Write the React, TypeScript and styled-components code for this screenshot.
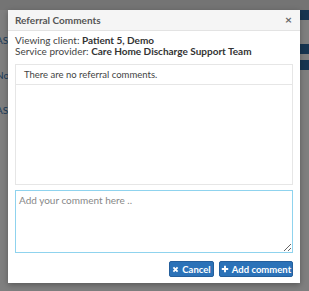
import React from 'react';
import styled, {createGlobalStyle} from 'styled-components';

const GlobalStyle = createGlobalStyle`
    html, body {
        margin: 0;
        padding: 0;
        width: 309px;
        height: 291px;
        overflow: hidden;
        font-family: Lato, "Open Sans", sans-serif;
    }
`;

const Page = styled.div`
    position: relative;
    width: 309px;
    height: 291px;
    background: #fff;
    display: grid;
    grid-template-rows: 10px 1fr;
`;

const TopBar = styled.div`
    background: #e8e8e8;
`;

const PageBody = styled.div`
    display: flex;
    justify-content: space-between;
`;

const LeftList = styled.div`
    width: 8px;
    overflow: hidden;
    display: flex;
    flex-direction: column;
    gap: 23px;
    padding-top: 24px;
    font-size: 10px;
    color: #3a78b5;
    white-space: nowrap;
    div {
        margin-left: -4px;
    }
`;

const RightList = styled.div`
    display: flex;
    flex-direction: column;
    gap: 6px;
    width: 11px;
    overflow: hidden;
`;

const PageButton = styled.div<{$h: number}>`
    width: 11px;
    height: ${p => p.$h}px;
    background: #2f6aa3;
`;

const PageLink = styled.div`
    height: 12px;
`;

const Overlay = styled.div`
    position: absolute;
    inset: 0;
    background: rgba(0, 0, 0, 0.5);
`;

const Modal = styled.div`
    position: absolute;
    left: 8px;
    top: 10px;
    width: 292px;
    height: 273px;
    background: #fff;
    display: flex;
    flex-direction: column;
    box-shadow: 0 2px 6px rgba(0, 0, 0, 0.3);
`;

const Header = styled.div`
    height: 21px;
    background: #f5f5f5;
    border-bottom: 1px solid #e3e3e3;
    display: flex;
    align-items: center;
    justify-content: space-between;
    padding: 0 8px 0 7px;
    box-sizing: border-box;
`;

const Title = styled.div`
    font-size: 10px;
    font-weight: 700;
    color: #555;
`;

const Close = styled.div`
    font-size: 12px;
    font-weight: 700;
    color: #666;
    line-height: 1;
`;

const Body = styled.div`
    flex: 1;
    display: flex;
    flex-direction: column;
    padding: 4px 7px 6px;
`;

const Info = styled.div`
    font-size: 10px;
    line-height: 11px;
    color: #444;
    b {
        color: #333;
    }
`;

const Comments = styled.div`
    margin-top: 7px;
    height: 121px;
    border: 1px solid #e6e6e6;
    box-sizing: border-box;
`;

const CommentRow = styled.div`
    height: 19px;
    border-bottom: 1px solid #e6e6e6;
    display: flex;
    align-items: center;
    padding-left: 8px;
    font-size: 9.5px;
    color: #444;
`;

const TextArea = styled.textarea`
    margin-top: 5px;
    height: 63px;
    border: 1px solid #8fd3ee;
    box-sizing: border-box;
    padding: 3px 3px;
    font-family: Lato, "Open Sans", sans-serif;
    font-size: 10px;
    color: #444;
    resize: vertical;
    outline: none;
    &::placeholder {
        color: #888;
    }
`;

const Footer = styled.div`
    margin-top: 8px;
    display: flex;
    justify-content: flex-end;
    gap: 5px;
`;

const Button = styled.button<{$w: number}>`
    width: ${p => p.$w}px;
    height: 16px;
    background: #2b72b8;
    border: 1px solid #255f9c;
    border-radius: 2px;
    color: #fff;
    font-family: Lato, "Open Sans", sans-serif;
    font-size: 9.5px;
    font-weight: 700;
    display: flex;
    align-items: center;
    justify-content: center;
    gap: 3px;
    padding: 0;
    svg {
        display: block;
    }
`;

export default function App() {
    return (
        <>
            <GlobalStyle/>
            <Page>
                <TopBar/>
                <PageBody>
                    <LeftList>
                        <div>ASi</div>
                        <div>No</div>
                        <div>AS</div>
                    </LeftList>
                    <RightList>
                        <PageButton $h={10}/>
                        <PageLink/>
                        <PageButton $h={10}/>
                        <PageButton $h={10}/>
                    </RightList>
                </PageBody>
                <Overlay/>
                <Modal>
                    <Header>
                        <Title>Referral Comments</Title>
                        <Close>×</Close>
                    </Header>
                    <Body>
                        <Info>Viewing client: <b>Patient 5, Demo</b></Info>
                        <Info>Service provider: <b>Care Home Discharge Support Team</b></Info>
                        <Comments>
                            <CommentRow>There are no referral comments.</CommentRow>
                        </Comments>
                        <TextArea placeholder='Add your comment here ..'/>
                        <Footer>
                            <Button $w={45}>
                                <svg width='7' height='7' viewBox='0 0 10 10'>
                                    <path d='M2 2 L8 8 M8 2 L2 8' stroke='#fff' strokeWidth='2.6'/>
                                </svg>
                                Cancel
                            </Button>
                            <Button $w={74}>
                                <svg width='8' height='8' viewBox='0 0 10 10'>
                                    <path d='M5 1 V9 M1 5 H9' stroke='#fff' strokeWidth='2.4'/>
                                </svg>
                                Add comment
                            </Button>
                        </Footer>
                    </Body>
                </Modal>
            </Page>
        </>
    );
}
